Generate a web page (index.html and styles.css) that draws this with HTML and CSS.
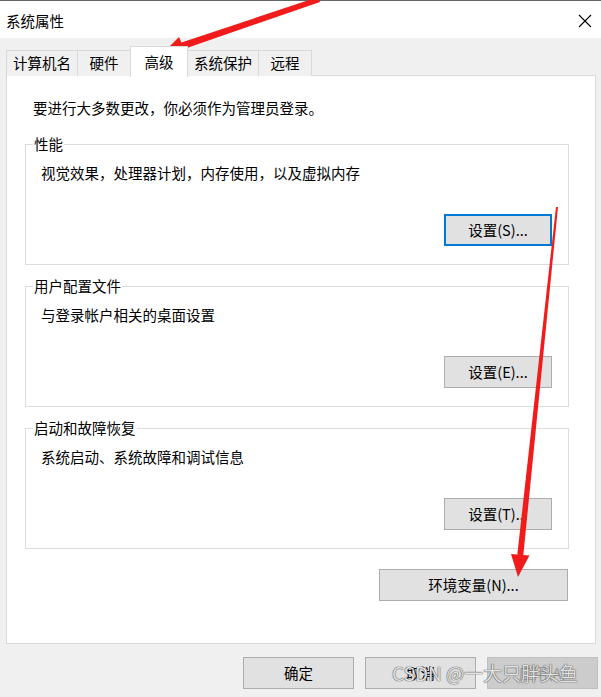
FILE: index.html
```html
<!DOCTYPE html>
<html lang="zh-CN">
<head>
<meta charset="utf-8">
<title>系统属性</title>
<link rel="stylesheet" href="styles.css">
</head>
<body>
<div class="window">
  <div class="titlebar">
    <span class="title">系统属性</span>
    <svg class="close" width="14" height="14" viewBox="0 0 14 14"><path d="M1 1L13 13M13 1L1 13" stroke="#000" stroke-width="1.1" fill="none"/></svg>
  </div>
  <div class="tabs">
    <div class="tab">计算机名</div>
    <div class="tab">硬件</div>
    <div class="tab active">高级</div>
    <div class="tab">系统保护</div>
    <div class="tab">远程</div>
  </div>
  <div class="panel">
    <p class="notice">要进行大多数更改，你必须作为管理员登录。</p>
    <fieldset class="group">
      <legend>性能</legend>
      <div class="group-body">
        <p class="desc">视觉效果，处理器计划，内存使用，以及虚拟内存</p>
        <div class="row-end"><button class="btn btn-set focused">设置(S)...</button></div>
      </div>
    </fieldset>
    <fieldset class="group">
      <legend>用户配置文件</legend>
      <div class="group-body">
        <p class="desc">与登录帐户相关的桌面设置</p>
        <div class="row-end"><button class="btn btn-set">设置(E)...</button></div>
      </div>
    </fieldset>
    <fieldset class="group">
      <legend>启动和故障恢复</legend>
      <div class="group-body">
        <p class="desc">系统启动、系统故障和调试信息</p>
        <div class="row-end"><button class="btn btn-set">设置(T)...</button></div>
      </div>
    </fieldset>
    <div class="env-row"><button class="btn btn-env">环境变量(N)...</button></div>
  </div>
  <div class="footer">
    <button class="btn btn-foot">确定</button>
    <button class="btn btn-foot">取消</button>
    <button class="btn btn-foot disabled">应用(A)</button>
  </div>
  <div class="watermark">CSDN @一大只胖头鱼</div>
  <svg class="arrows" width="601" height="697" viewBox="0 0 601 697">
    <polygon points="162,54 186,53 179,37" fill="#f01c1c"/>
    <polygon points="180,43 184,49 320,2 318,-3" fill="#f01c1c"/>
    <polygon points="558,207 556,206.9 517.3,554.8 523.3,555.4" fill="#f01c1c"/>
    <polygon points="518,577 529.5,555.5 511,554" fill="#f01c1c"/>
  </svg>
</div>
</body>
</html>
```

FILE: styles.css
```css
* { box-sizing: border-box; }
html, body { margin: 0; padding: 0; background: #f0f0f0; }
body {
  font-family: "Noto Sans CJK SC", "Noto Sans", sans-serif;
  font-size: 14.5px;
  color: #000;
}
.window {
  position: relative;
  width: 601px;
  height: 697px;
  overflow: hidden;
  background: #f0f0f0;
}
.titlebar {
  height: 38px;
  background: #fff;
  border-top: 1px solid #666;
  display: flex;
  align-items: center;
  justify-content: space-between;
  padding: 2px 9px 0 6px;
}
.title { line-height: 20px; }
.close { display: block; }
.tabs {
  display: flex;
  align-items: flex-end;
  margin-top: 8px;
  padding-left: 6px;
  height: 30px;
  position: relative;
  z-index: 1;
}
.tab {
  height: 26px;
  line-height: 24px;
  padding: 0 6px;
  min-width: 54px;
  text-align: center;
  border: 1px solid #d9d9d9;
  border-bottom: none;
  background: #f0f0f0;
  margin-left: -1px;
}
.tab:first-child { margin-left: 0; }
.tab.active {
  height: 31px;
  line-height: 29px;
  background: #fff;
  min-width: 58px;
  margin-bottom: -1px;
}
.panel {
  margin-left: 6px;
  width: 590px;
  height: 569px;
  margin-top: -1px;
  background: #fff;
  border: 1px solid #d9d9d9;
  padding: 22px 26px 0 18px;
  display: flex;
  flex-direction: column;
}
.notice {
  margin: 0 0 16px 8px;
  line-height: 20px;
}
.group {
  margin: 0 0 11px 0;
  padding: 0;
  border: 1px solid #dcdcdc;
  min-width: 0;
}
.group legend {
  margin-left: 7px;
  padding: 0 1px;
  line-height: 20px;
}
.group-body {
  padding: 9px 16px 18px 15px;
}
.desc {
  margin: 0;
  line-height: 20px;
}
.row-end {
  display: flex;
  justify-content: flex-end;
  margin-top: 31px;
}
.btn {
  font-family: inherit;
  font-size: 14.5px;
  color: #000;
  background: #e1e1e1;
  border: 1px solid #adadad;
  height: 32px;
  padding: 0;
  margin: 0;
  line-height: 20px;
}
.btn-set { width: 108px; }
.btn.focused { border: 2px solid #0078d7; }
.env-row {
  display: flex;
  justify-content: flex-end;
  margin-top: 9px;
  margin-right: 1px;
}
.btn-env { width: 189px; }
.footer {
  display: flex;
  justify-content: flex-end;
  gap: 11px;
  margin-top: 13px;
  padding-right: 3px;
}
.btn-foot { width: 111px; }
.btn-foot.disabled {
  background: #cccccc;
  border-color: #bfbfbf;
  color: #9a9a9a;
}
.watermark {
  position: absolute;
  left: 392px;
  top: 660px;
  font-size: 19px;
  line-height: 26px;
  color: rgba(255, 255, 255, 0.85);
  text-shadow: 0 0 1px #444, 0 0 1px #444;
  white-space: nowrap;
}
.arrows {
  position: absolute;
  left: 0;
  top: 0;
  pointer-events: none;
}
```
